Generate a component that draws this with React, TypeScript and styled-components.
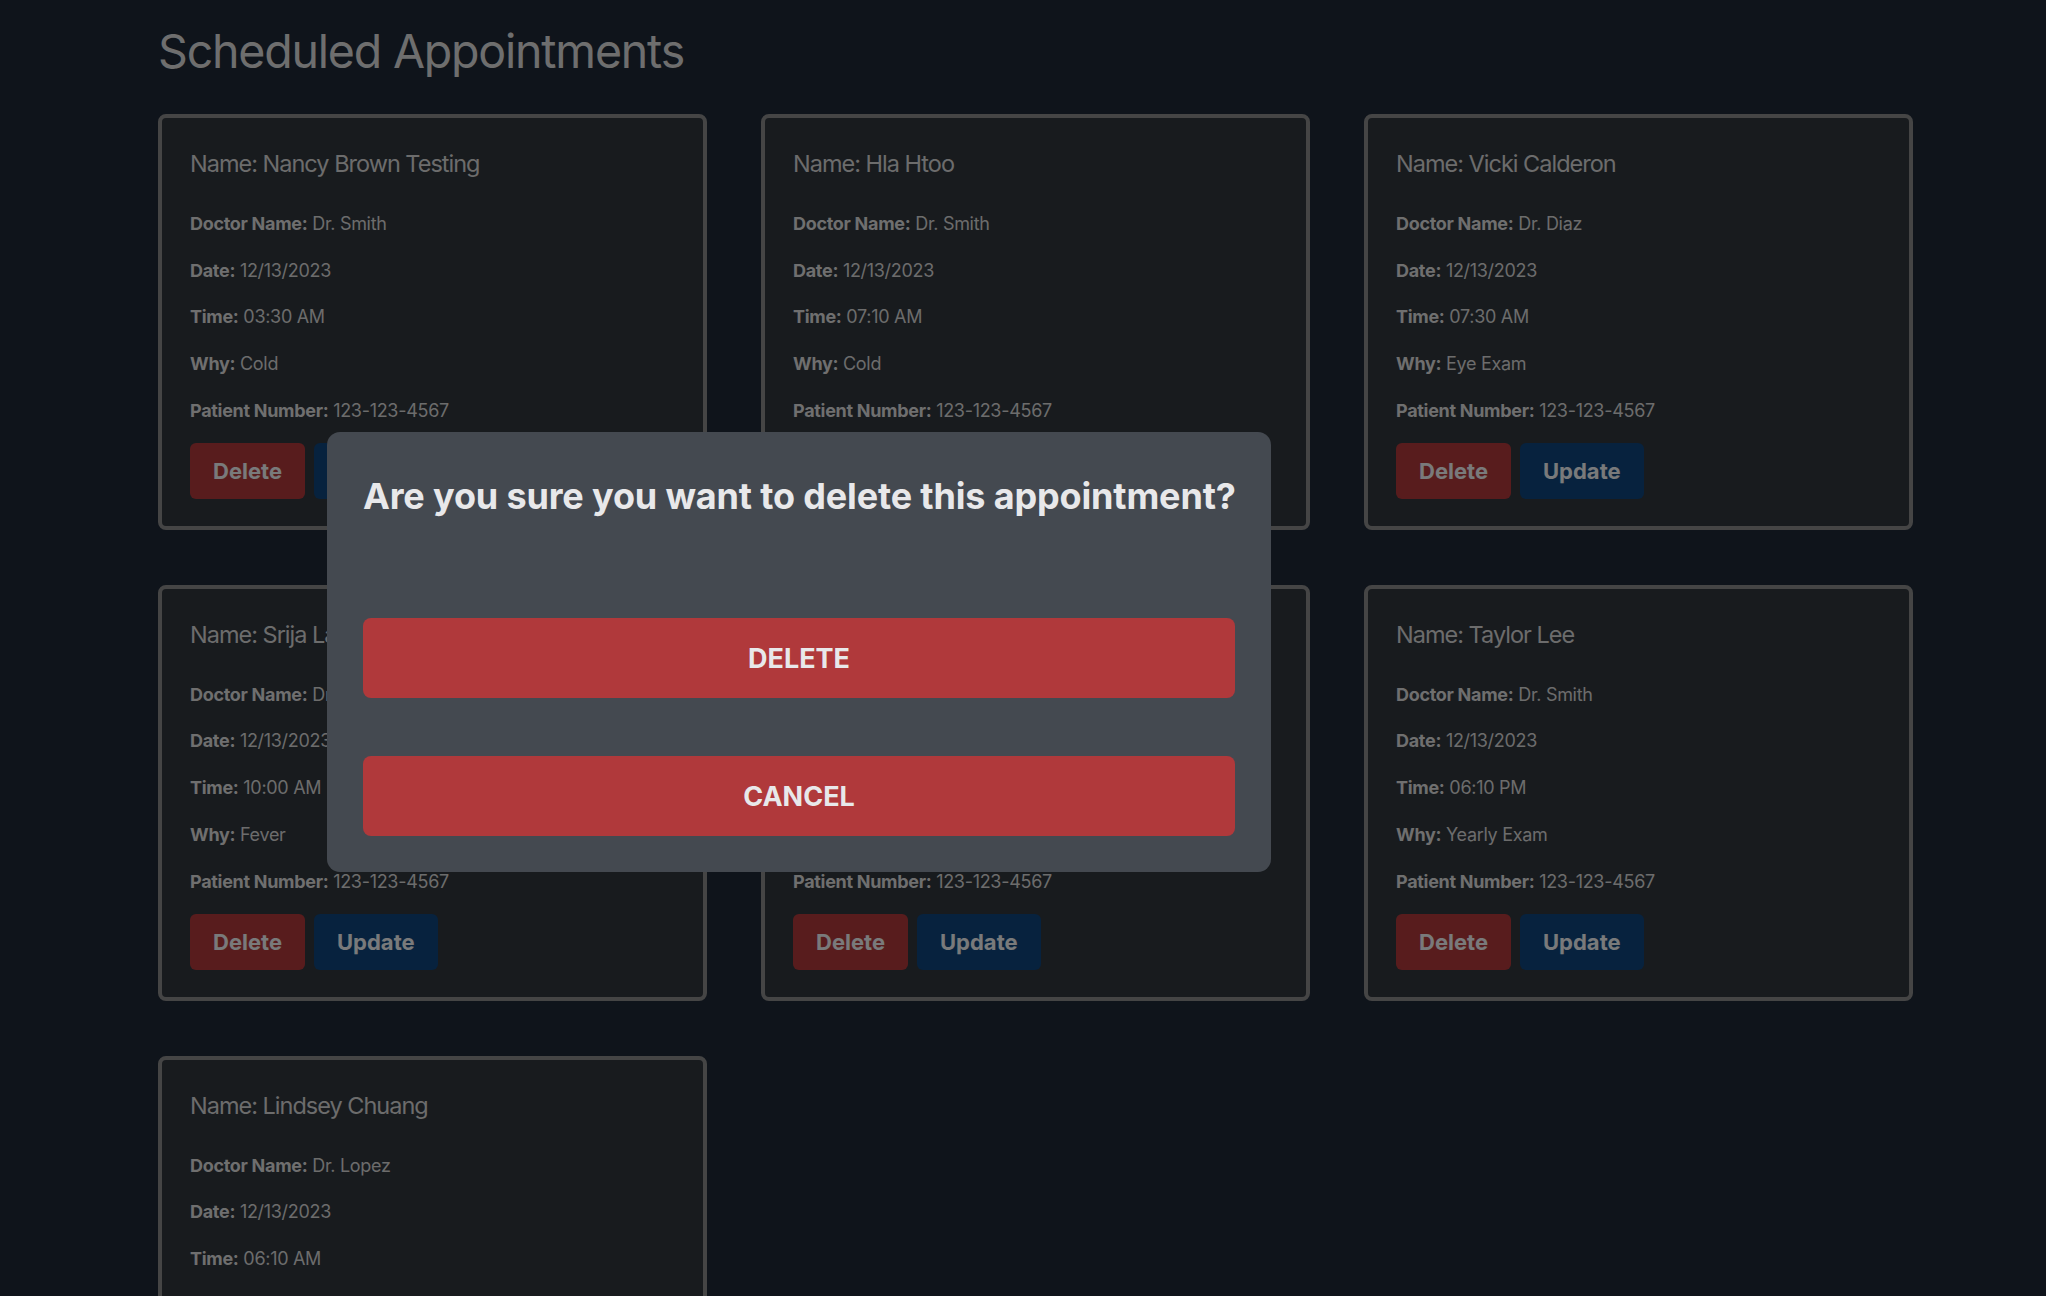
import React from "react";
import styled, { createGlobalStyle } from "styled-components";

const GlobalStyle = createGlobalStyle`
  html, body {
    margin: 0;
    padding: 0;
    background: #1f2937;
    font-family: Inter, "Noto Sans", "Liberation Sans", sans-serif;
    overflow: hidden;
  }
  * { box-sizing: border-box; }
`;

const Page = styled.main`
  padding: 23px 0 40px 158px;
`;

const Title = styled.h1`
  margin: 0 0 34px 0;
  font-size: 46.5px;
  font-weight: 400;
  line-height: 57px;
  color: #dddddd;
  letter-spacing: -1.2px;
`;

const Grid = styled.section`
  display: grid;
  grid-template-columns: repeat(3, 549px);
  gap: 55px 54px;
`;

const Card = styled.article`
  background: #30363d;
  border: 4px solid #8b8b8b;
  border-radius: 8px;
  padding: 30px 28px 27px 28px;
  display: flex;
  flex-direction: column;
`;

const Name = styled.h3`
  margin: 0 0 30px 0;
  font-size: 23.5px;
  font-weight: 400;
  line-height: 32px;
  color: #d8d8d8;
  letter-spacing: -1px;
`;

const Details = styled.div`
  display: flex;
  flex-direction: column;
  gap: 18.7px;
`;

const Detail = styled.p`
  margin: 0;
  font-size: 18px;
  line-height: 28px;
  color: #d8d8d8;
  font-weight: 400;
  letter-spacing: -0.3px;
`;

const Label = styled.strong`
  font-weight: 700;
  color: #dedede;
`;

const Actions = styled.div`
  display: flex;
  gap: 9px;
  margin-top: 18px;
`;

const CardButton = styled.button<{ $variant: "delete" | "update" }>`
  height: 56px;
  padding: 0 23px;
  border: none;
  border-radius: 6px;
  font-family: inherit;
  font-size: 22px;
  font-weight: 700;
  color: #f3f4f6;
  background: ${(p) => (p.$variant === "delete" ? "#b0393b" : "#0e457c")};
  cursor: pointer;
`;

const Overlay = styled.div`
  position: fixed;
  inset: 0;
  background: rgba(0, 0, 0, 0.5);
`;

const Modal = styled.div`
  position: fixed;
  left: 327px;
  top: 432px;
  width: 944px;
  height: 440px;
  background: #444950;
  border-radius: 13px;
  padding: 36px;
  display: flex;
  flex-direction: column;
`;

const ModalTitle = styled.h2`
  margin: 6px 0 100px 0;
  font-size: 36px;
  font-weight: 700;
  line-height: 44px;
  color: #e8e8ea;
  white-space: nowrap;
  letter-spacing: -0.15px;
`;

const ModalButtons = styled.div`
  display: flex;
  flex-direction: column;
  gap: 58px;
`;

const ModalButton = styled.button`
  height: 80px;
  width: 100%;
  border: none;
  border-radius: 8px;
  background: #b0393b;
  color: #e8e8ea;
  font-family: inherit;
  font-size: 27px;
  font-weight: 700;
  text-transform: uppercase;
  cursor: pointer;
`;

type Appt = {
  name: string;
  doctor: string;
  date: string;
  time: string;
  why: string;
  phone: string;
};

const appointments: Appt[] = [
  { name: "Nancy Brown Testing", doctor: "Dr. Smith", date: "12/13/2023", time: "03:30 AM", why: "Cold", phone: "123-123-4567" },
  { name: "Hla Htoo", doctor: "Dr. Smith", date: "12/13/2023", time: "07:10 AM", why: "Cold", phone: "123-123-4567" },
  { name: "Vicki Calderon", doctor: "Dr. Diaz", date: "12/13/2023", time: "07:30 AM", why: "Eye Exam", phone: "123-123-4567" },
  { name: "Srija Lal", doctor: "Dr. Diaz", date: "12/13/2023", time: "10:00 AM", why: "Fever", phone: "123-123-4567" },
  { name: "Maria Gomez", doctor: "Dr. Lopez", date: "12/13/2023", time: "11:20 AM", why: "Checkup", phone: "123-123-4567" },
  { name: "Taylor Lee", doctor: "Dr. Smith", date: "12/13/2023", time: "06:10 PM", why: "Yearly Exam", phone: "123-123-4567" },
  { name: "Lindsey Chuang", doctor: "Dr. Lopez", date: "12/13/2023", time: "06:10 AM", why: "Flu", phone: "123-123-4567" },
];

export default function App() {
  return (
    <>
      <GlobalStyle />
      <Page>
        <Title>Scheduled Appointments</Title>
        <Grid>
          {appointments.map((a, i) => (
            <Card key={i}>
              <Name>Name: {a.name}</Name>
              <Details>
                <Detail><Label>Doctor Name:</Label> {a.doctor}</Detail>
                <Detail><Label>Date:</Label> {a.date}</Detail>
                <Detail><Label>Time:</Label> {a.time}</Detail>
                <Detail><Label>Why:</Label> {a.why}</Detail>
                <Detail><Label>Patient Number:</Label> {a.phone}</Detail>
              </Details>
              <Actions>
                <CardButton $variant="delete">Delete</CardButton>
                <CardButton $variant="update">Update</CardButton>
              </Actions>
            </Card>
          ))}
        </Grid>
      </Page>
      <Overlay />
      <Modal role="dialog">
        <ModalTitle>Are you sure you want to delete this appointment?</ModalTitle>
        <ModalButtons>
          <ModalButton>Delete</ModalButton>
          <ModalButton>Cancel</ModalButton>
        </ModalButtons>
      </Modal>
    </>
  );
}
